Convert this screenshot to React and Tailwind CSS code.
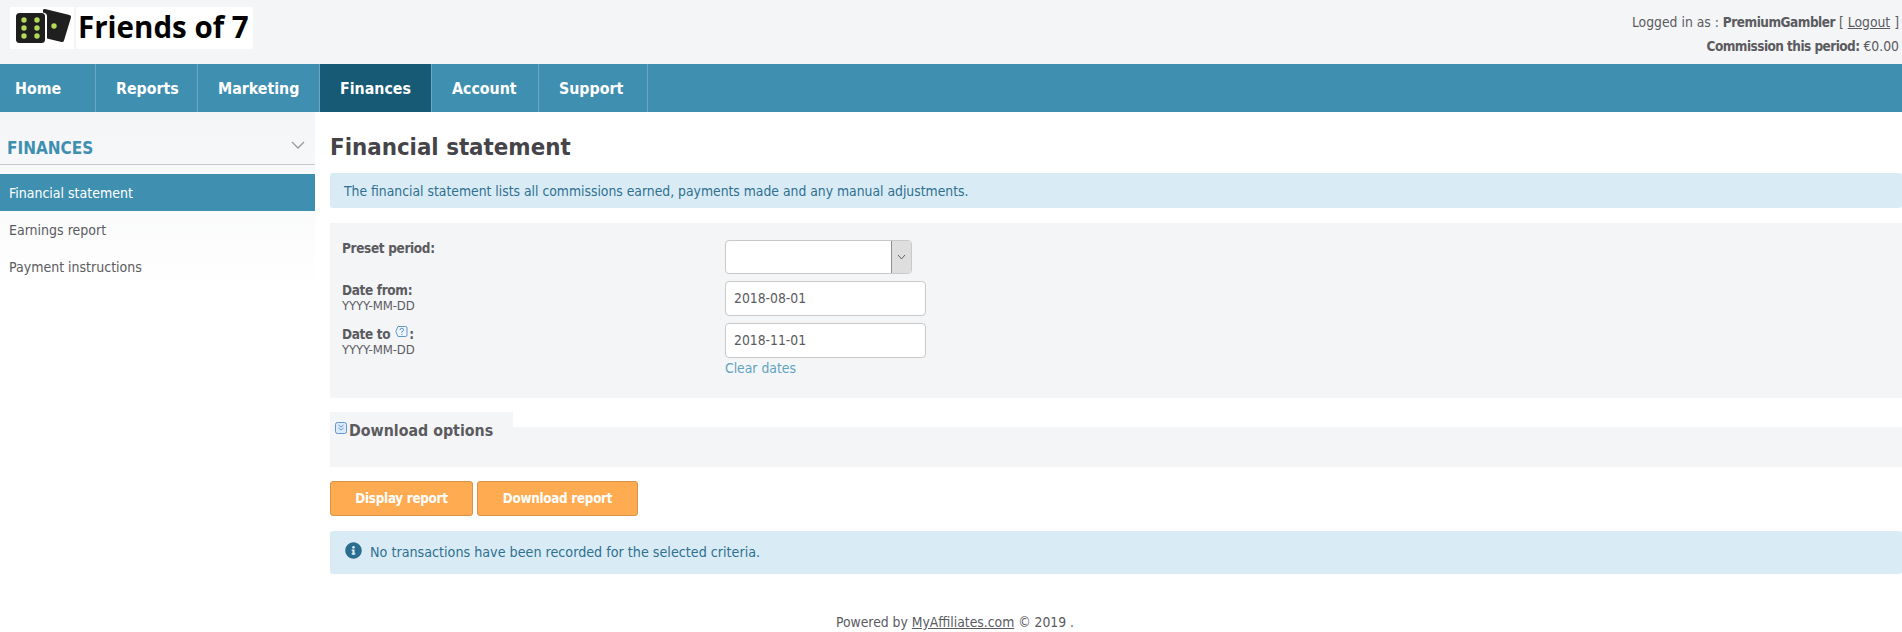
import React from "react";
import { FaInfoCircle } from "react-icons/fa";

const nav = [
  ["Home", "w-[96px]"],
  ["Reports", "w-[102px]"],
  ["Marketing", "w-[122px]"],
  ["Finances", "w-[112px]"],
  ["Account", "w-[107px]"],
  ["Support", "w-[109px]"],
];

function Dice() {
  const dots = [[14, 13], [27, 13], [14, 21], [27, 21], [14, 29], [27, 29]];
  return (
    <svg width="64" height="42" viewBox="0 0 64 42">
      <path d="M33 3 Q33.500 1.500 35 2 L59.500 8 Q61.500 8.500 61 10.500 L54 33.500 Q53.500 35.500 51.500 35 L37 31.500 V9 Q37 6 33 5.500 Z" fill="#1f1f1f" />
      <rect x="6" y="6" width="29" height="30" rx="3.500" fill="#1f1f1f" />
      {dots.map(([x, y]) => (
        <circle key={x + "-" + y} cx={x} cy={y} r="2.700" fill="#b4d957" />
      ))}
      <circle cx="44" cy="19" r="2.700" fill="#b4d957" />
    </svg>
  );
}

function Help() {
  return (
    <svg width="13" height="13" viewBox="0 0 13 13" className="inline-block align-[1px] mx-[1px]" fill="none" stroke="#3f7fc0" strokeWidth="0.800">
      <path d="M3 1.500 H10.500 Q12 1.500 12 3 V10 Q12 11.500 10.500 11.500 H3 L0.800 6.500 Z" fill="#eef5fc" />
      <path d="M5 5 Q5 3.300 6.800 3.300 Q8.600 3.300 8.600 4.900 Q8.600 6 6.800 6.800 V7.800 M6.800 9 V10" />
    </svg>
  );
}

export default function App() {
  return (
    <div className="min-h-[632px] bg-white font-['DejaVu_Sans_Condensed',sans-serif] text-[13.8px] text-[#5b5b5f]">
      <header className="h-[64px] bg-[#f4f5f7] flex justify-between">
        <div className="flex gap-[2px] pl-[10px] pt-[7px]">
          <div className="w-[64px] h-[42px] bg-white"><Dice /></div>
          <div className="w-[177px] h-[42px] bg-white pl-[2px] font-['Open_Sans',sans-serif] font-bold text-[29.500px] leading-[40px] text-black whitespace-nowrap">Friends of 7</div>
        </div>
        <div className="pt-[10px] pr-[3px] text-right leading-[24px]">
          <div>Logged in as : <b className="text-[13.500px] tracking-[-0.500px]">PremiumGambler</b> [ <span className="underline">Logout</span> ]</div>
          <div><b className="text-[13.500px] tracking-[-0.550px]">Commission this period:</b> €0.00</div>
        </div>
      </header>

      <nav className="h-[48px] bg-[#3f8fb0] flex">
        {nav.map(([label, w], i) => (
          <div
            key={label}
            className={label === "Finances"
              ? `${w} h-full bg-[#175a76] border-r border-[#6ba8c2] pl-[20px] text-[15.800px] font-bold text-white leading-[50px]`
              : `${w} h-full border-r border-[#6ba8c2] ${i === 0 ? "pl-[15px]" : "pl-[20px]"} text-[15.800px] font-bold text-white leading-[50px]`}
          >
            {label}
          </div>
        ))}
      </nav>

      <div className="flex">
        <aside className="w-[315px] h-[178px] shrink-0 bg-gradient-to-b from-[#f4f5f7] to-white">
          <div className="h-[53px] border-b border-[#c8c8c8] flex justify-between items-end pl-[7px] pr-[10px] pb-[1px]">
            <span className="text-[#3f8fb0] font-bold text-[17px] leading-[30px]">FINANCES</span>
            <svg width="14" height="8" viewBox="0 0 14 8" fill="none" stroke="#9a9a9a" strokeWidth="1.300" className="mb-[14px]"><path d="M1 1 L7 7 L13 1" /></svg>
          </div>
          <div className="pt-[9px] text-[14px]">
            <div className="h-[37px] leading-[39px] pl-[9px] bg-[#3f8fb0] text-white">Financial statement</div>
            <div className="h-[37px] leading-[39px] pl-[9px]">Earnings report</div>
            <div className="h-[37px] leading-[39px] pl-[9px]">Payment instructions</div>
          </div>
        </aside>

        <main className="flex-1 pl-[15px]">
          <h1 className="h-[61px] pt-[17px] text-[23.800px] leading-[36px] font-bold text-[#444449]">Financial statement</h1>
          <div className="h-[35px] leading-[36px] pl-[14px] bg-[#d9ecf5] rounded-[3px] text-[#2f6f90]">
            The financial statement lists all commissions earned, payments made and any manual adjustments.
          </div>

          <section className="mt-[15px] h-[175px] bg-[#f4f5f7] pl-[12px] pt-[17px] flex">
            <div className="w-[383px] shrink-0 leading-[15px]">
              <div className="h-[41px] pt-[1px]"><b className="text-[13.500px] tracking-[-0.350px]">Preset period:</b></div>
              <div className="h-[42px] pt-[2px]"><b className="text-[13.500px] tracking-[-0.350px]">Date from:</b><br /><span className="text-[13px] tracking-[-0.100px]">YYYY-MM-DD</span></div>
              <div className="pt-[2px]"><b className="text-[13.500px] tracking-[-0.350px]">Date to <Help />:</b><br /><span className="text-[13px] tracking-[-0.100px]">YYYY-MM-DD</span></div>
            </div>
            <div>
              <div className="w-[187px] h-[34px] bg-white border border-[#c9c9c9] rounded-[4px] flex justify-end mb-[7px] overflow-hidden">
                <div className="w-[20px] bg-[#dedede] border-l border-[#8f8f8f] flex items-center justify-center">
                  <svg width="9" height="6" viewBox="0 0 9 6" fill="none" stroke="#555" strokeWidth="0.900"><path d="M1 1 L4.500 5 L8 1" /></svg>
                </div>
              </div>
              <div className="w-[201px] h-[35px] bg-white border border-[#c9c9c9] rounded-[4px] pl-[8px] leading-[33px] mb-[7px]">2018-08-01</div>
              <div className="w-[201px] h-[35px] bg-white border border-[#c9c9c9] rounded-[4px] pl-[8px] leading-[33px]">2018-11-01</div>
              <div className="text-[#5fa3bd] leading-[20px]">Clear dates</div>
            </div>
          </section>

          <section className="mt-[14px]">
            <div className="w-[183px] h-[15px] bg-[#f4f5f7] flex items-start pl-[5px] pt-[6px] leading-[25px]">
              <svg width="12" height="12" viewBox="0 0 12 12" fill="#dceafa" stroke="#3f7fc0" strokeWidth="0.800" className="mt-[4px] mr-[2px] shrink-0">
                <rect x="0.500" y="0.500" width="11" height="11" rx="2" />
                <path d="M3.500 3 L6 5 L8.500 3 M3.500 6 L6 8 L8.500 6" fill="none" />
              </svg>
              <span className="font-bold text-[15.800px] whitespace-nowrap">Download options</span>
            </div>
            <div className="h-[40px] bg-[#f4f5f7]" />
          </section>

          <div className="mt-[14px] flex gap-[4px]">
            <button className="w-[143px] h-[35px] bg-[#ffab52] border border-[#d99148] rounded-[3px] text-white font-bold text-[13.300px] tracking-[-0.250px]">Display report</button>
            <button className="w-[161px] h-[35px] bg-[#ffab52] border border-[#d99148] rounded-[3px] text-white font-bold text-[13.300px] tracking-[-0.250px]">Download report</button>
          </div>

          <div className="mt-[15px] h-[43px] bg-[#d9ecf5] rounded-[3px] flex items-center pl-[15px] text-[#2f6f90] text-[14.200px]">
            <FaInfoCircle className="text-[#2b6d90] text-[17px] mr-[8px] -mt-[4px]" />
            <span>No transactions have been recorded for the selected criteria.</span>
          </div>
        </main>
      </div>
      <footer className="pt-[40px] text-center pl-[8px] leading-[16px]">
        Powered by <span className="underline">MyAffiliates.com</span> © 2019 .
      </footer>
    </div>
  );
}
